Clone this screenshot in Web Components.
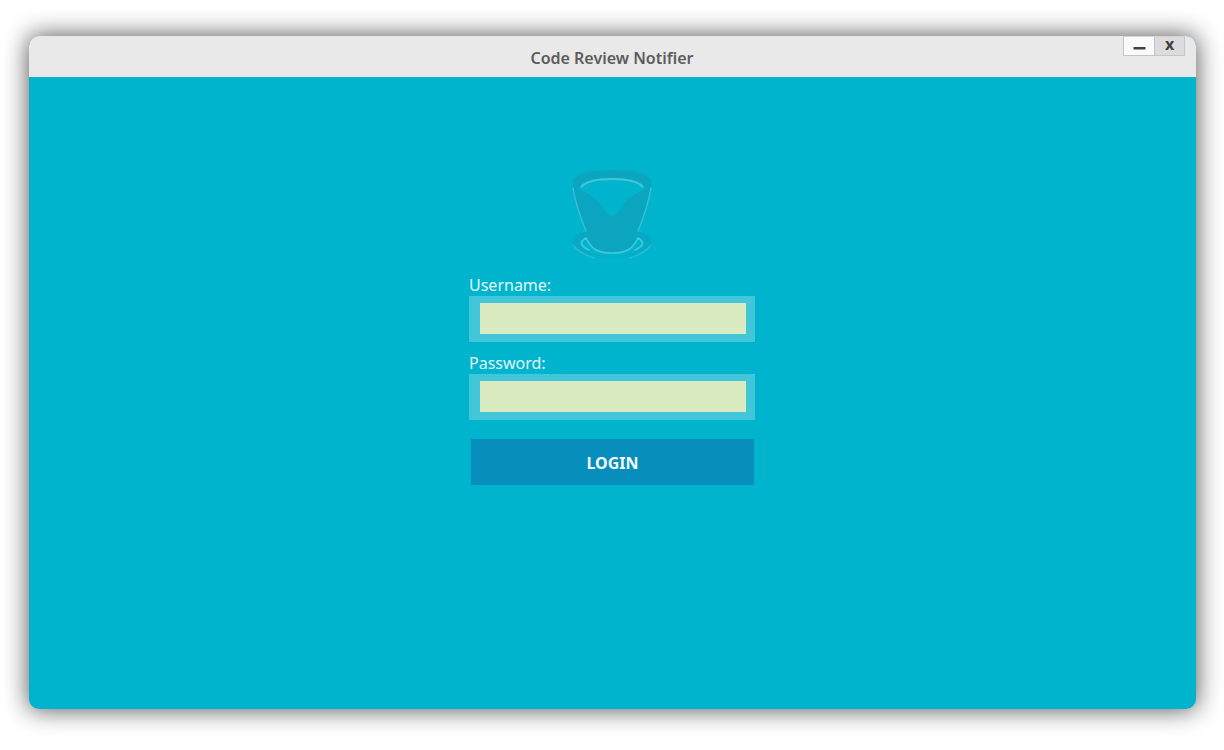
<!DOCTYPE html>
<html lang="en">
<head>
<meta charset="utf-8">
<meta name="viewport" content="width=device-width, initial-scale=1">
<title>Code Review Notifier</title>
<style>
  * { box-sizing: border-box; }
  body {
    margin: 0;
    min-height: 100vh;
    padding: 36px 28px 41px 29px;
    display: flex;
    background: #fff;
    font-family: "Noto Sans", "Open Sans", sans-serif;
  }
</style>
</head>
<body>
<app-window>
  <title-bar slot="header">Code Review Notifier</title-bar>
  <login-form>
    <hat-logo slot="logo"></hat-logo>
    <text-field label="Username:" type="text" name="username"></text-field>
    <text-field label="Password:" type="password" name="password"></text-field>
    <submit-button slot="action">LOGIN</submit-button>
  </login-form>
</app-window>

<script>
  const define = (name, html, setup) => {
    const template = document.createElement("template");
    template.innerHTML = html;
    customElements.define(name, class extends HTMLElement {
      constructor() {
        super();
        this.attachShadow({ mode: "open" }).append(template.content.cloneNode(true));
      }
      connectedCallback() {
        if (setup) setup(this, this.shadowRoot);
      }
    });
  };

  define("app-window", `
    <style>
      :host {
        flex: 1;
        display: flex;
        flex-direction: column;
        border-radius: 10px;
        background: #00b4ce;
        box-shadow: 0 0 24px 1px rgba(0, 0, 0, .65);
      }
      main { flex: 1; display: flex; justify-content: center; padding-right: 1px; }
    </style>
    <slot name="header"></slot>
    <main><slot></slot></main>
  `);

  define("title-bar", `
    <style>
      :host {
        display: grid;
        grid-template-columns: 1fr auto 1fr;
        height: 41px;
        padding-right: 1px;
        border-radius: 10px 10px 0 0;
        background: #e9e9e9;
        color: #5c5c5c;
      }
      h1 {
        grid-column: 2;
        margin: 0;
        font-size: 16px;
        font-weight: 600;
        line-height: 44px;
      }
      .controls {
        box-sizing: border-box;
        justify-self: end;
        display: flex;
        height: 20px;
        margin-right: 10px;
        border: 1px solid #c4c4c4;
        border-top-color: #d4d4d4;
      }
      button {
        display: grid;
        place-items: center;
        width: 30px;
        padding: 0;
        border: 0;
        background: #fafafa;
        color: #404040;
        font: 700 16px/14px "Noto Sans", sans-serif;
      }
      button + button { padding-bottom: 4px; border-left: 1px solid #c4c4c4; background: #dcdcdc; }
      svg { display: block; }
    </style>
    <h1><slot></slot></h1>
    <div class="controls">
      <button type="button" aria-label="Minimize">
        <svg width="14" height="14" viewBox="0 0 14 14" aria-hidden="true"><path fill="currentColor" d="M1.500 8h12v2.500h-12z"/></svg>
      </button>
      <button type="button" aria-label="Close">x</button>
    </div>
  `);

  define("login-form", `
    <style>
      :host { display: block; width: 286px; max-width: 100%; padding: 83px 0 24px; }
      form { display: grid; gap: 10px; }
      .logo { display: flex; justify-content: center; margin-bottom: 4px; }
      .action { padding: 9px 1px 0 2px; }
    </style>
    <div class="logo"><slot name="logo"></slot></div>
    <form>
      <slot></slot>
      <div class="action"><slot name="action"></slot></div>
    </form>
  `);

  define("hat-logo", `
    <style>
      :host { display: block; }
      svg { display: block; }
    </style>
    <svg width="104" height="110" viewBox="0 0 104 110" role="img" aria-label="Logo">
      <defs>
        <linearGradient id="brim" x1="0" y1="72" x2="0" y2="102" gradientUnits="userSpaceOnUse">
          <stop offset="0" stop-color="#08a9c4"/>
          <stop offset=".5" stop-color="#08a9c4"/>
          <stop offset="1" stop-color="#00b4ce"/>
        </linearGradient>
      </defs>
      <g fill="none" stroke-linecap="round">
        <path fill="url(#brim)" d="M25 72C11 75 9 83 17 89c18 13 52 13 70 0 8-6 6-14-8-17z"/>
        <path fill="#00b4ce" d="M27 77h50c8 4 9 8 3 12-14 9-42 9-56 0-6-4-5-8 3-12z"/>
        <path stroke="#2bbad0" stroke-width="1.6" d="M14 86c4 6 11 9 20 12M90 86c-4 6-11 9-20 12"/>
        <path fill="#0ba5c0" d="M13 21C15 13 32 10 52 10s37 3 39 11c1 10-6 34-13 51-3 8-5 14-9 17-8 5-26 5-34 0-4-3-6-9-9-17C19 55 12 31 13 21z"/>
        <path fill="#00b4ce" d="M20 30C24 21 38 19 52 19s28 2 32 11c-9 3-15 7-21 15-4 6-7 11-11 11s-7-5-11-11c-6-8-12-12-21-15z"/>
        <path stroke="#46c6d9" stroke-width="1.8" d="M21 27C26 21 38 19 52 19s26 2 31 8"/>
        <path stroke="#38bfd4" stroke-width="1.5" d="M13 28c2 12 6 26 13 43M91 28c-2 12-6 26-13 43"/>
        <path stroke="#46c6d9" stroke-width="1.6" d="M26 78c-7 4-6 8 3 12M78 78c7 4 6 8-3 12M26 78c5 10 10 15 26 15s21-5 26-15"/>
      </g>
    </svg>
  `);

  define("text-field", `
    <style>
      :host { display: block; }
      label {
        display: block;
        color: #e3f7fa;
        font-size: 16px;
        line-height: 22px;
      }
      .frame { height: 46px; padding: 7px 9px 8px 11px; background: #42c7da; box-sizing: border-box; }
      input {
        display: block;
        box-sizing: border-box;
        width: 100%;
        height: 31px;
        padding: 0 8px;
        border: 0;
        border-radius: 0;
        background: #dbebc1;
        color: #333;
        font: inherit;
      }
    </style>
    <label for="control"></label>
    <div class="frame"><input id="control"></div>
  `, (host, root) => {
    root.querySelector("label").textContent = host.getAttribute("label");
    const input = root.querySelector("input");
    input.type = host.getAttribute("type");
    input.name = host.getAttribute("name");
  });

  define("submit-button", `
    <style>
      :host { display: block; }
      button {
        display: block;
        width: 100%;
        height: 46px;
        padding: 2px 0 0;
        border: 0;
        background: #078ebc;
        color: #f2fafc;
        font-family: inherit;
        font-size: 16px;
        font-weight: 700;
      }
    </style>
    <button type="submit"><slot></slot></button>
  `);
</script>
</body>
</html>
